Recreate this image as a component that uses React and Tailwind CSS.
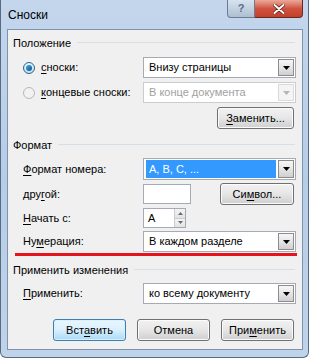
import React from 'react'

function U({ children }) {
  return <span className="underline underline-offset-2">{children}</span>
}

function Arrow({ disabled }) {
  return (
    <div
      className={`h-full w-[16px] border flex items-center justify-center ${
        disabled
          ? 'border-[#dadada] bg-[#f4f4f4]'
          : 'border-[#8c8c8c] bg-gradient-to-b from-[#f6f6f6] via-[#e6e6e6] to-[#cfcfcf]'
      }`}
    >
      <svg width="7" height="4" viewBox="0 0 7 4">
        <path d="M0 0h7L3.5 4z" fill={disabled ? '#b5b5b5' : '#000'} />
      </svg>
    </div>
  )
}

function Combo({ text, disabled, selected, h = 'h-[21px]' }) {
  return (
    <div
      className={`${h} w-[153px] border flex items-stretch p-px bg-white ${
        disabled ? 'border-[#c9cdd2]' : 'border-[#a4abb4]'
      }`}
    >
      <div className="flex-1 flex items-center pl-px pr-[2px]">
        <div
          className={`w-full h-full flex items-center pl-[3px] ${
            selected ? 'bg-[#3399ff] text-white' : disabled ? 'text-[#a0a0a0]' : 'text-black'
          }`}
        >
          {text}
        </div>
      </div>
      <Arrow disabled={disabled} />
    </div>
  )
}

function Button({ children, w = 'w-[73px]', def }) {
  return (
    <div
      className={`${w} h-[22px] rounded-[3px] border flex items-center justify-center ${
        def
          ? 'border-[#3c7fb1] bg-gradient-to-b from-[#eaf6fd] via-[#d9f0fc] to-[#a7d9f5] shadow-[inset_0_0_0_1px_#d7f0fd]'
          : 'border-[#707070] bg-gradient-to-b from-[#f2f2f2] via-[#e6e6e6] to-[#cfcfcf] shadow-[inset_0_0_0_1px_#fbfbfb]'
      }`}
    >
      {children}
    </div>
  )
}

function Heading({ children, className = '' }) {
  return (
    <div className={`h-[16px] flex items-center gap-[6px] ${className}`}>
      <span>{children}</span>
      <div className="flex-1 h-[2px] border-t border-[#d5dfe5] border-b-white mr-[1px]" />
    </div>
  )
}

function Row({ label, children, className = '', h = 'h-[21px]' }) {
  return (
    <div className={`${h} flex items-center pl-[10px] ${className}`}>
      <div className="w-[120px]">{label}</div>
      {children}
    </div>
  )
}

function Radio({ checked, label }) {
  return (
    <div className="w-[120px] flex items-center">
      <div
        className={`w-[12px] h-[12px] rounded-full border flex items-center justify-center ${
          checked ? 'border-[#2c628b] bg-gradient-to-b from-[#e8f4fb] to-[#c3dcec]' : 'border-[#b7b7b7] bg-[#f2f2f2]'
        }`}
      >
        {checked && <div className="w-[6px] h-[6px] rounded-full bg-gradient-to-br from-[#3eb0ef] to-[#0d4f86]" />}
      </div>
      <span className="ml-[6px]">{label}</span>
    </div>
  )
}

export default function App() {
  return (
    <div className="w-[309px] h-[358px] overflow-hidden font-['Liberation_Sans',sans-serif] text-[11px] leading-none text-black whitespace-nowrap">
      <div className="w-full h-full rounded-b-[6px] border border-t-0 border-[#5a6b80] bg-gradient-to-b from-[#c3d6ec] via-[#b6cde8] to-[#bfd3ea] flex flex-col pl-[6px] pr-[5px]">
        {/* Title bar */}
        <div className="h-[29px] flex items-start shrink-0">
          <div className="pt-[9px] pl-px text-[12px]">Сноски</div>
          <div className="ml-auto flex">
            <div className="w-[28px] h-[18px] rounded-bl-[4px] border border-t-0 border-[#6c7c90] bg-gradient-to-b from-[#d8e3ef] to-[#aebfd3] flex items-center justify-center text-[11px] text-[#5a6e86] font-bold">
              ?
            </div>
            <div className="w-[48px] h-[18px] rounded-br-[4px] border border-t-0 border-l-0 border-[#6a2a22] bg-gradient-to-b from-[#e9a99a] via-[#d0533f] to-[#c33f2b] flex items-center justify-center">
              <svg width="12" height="10" viewBox="0 0 12 10">
                <path d="M1.5 1l9 8M10.5 1l-9 8" stroke="#5a1c14" strokeWidth="3.4" strokeLinecap="round" />
                <path d="M1.5 1l9 8M10.5 1l-9 8" stroke="#fff" strokeWidth="2" strokeLinecap="round" />
              </svg>
            </div>
          </div>
        </div>

        {/* Client area */}
        <div className="h-[321px] border border-[#7f93ab] bg-[#f0f0f0] pl-[5px] pr-[6px] flex flex-col">
          <Heading className="mt-[5px]">Положение</Heading>
          <div className="h-[21px] mt-[6px] flex items-center pl-[10px]">
            <Radio checked label={<><U>с</U>носки:</>} />
            <Combo text="Внизу страницы" />
          </div>
          <div className="h-[21px] mt-[4px] flex items-center pl-[10px]">
            <Radio label={<><U>к</U>онцевые сноски:</>} />
            <Combo text="В конце документа" disabled />
          </div>
          <div className="mt-[4px] flex justify-end pr-[2px]">
            <Button w="w-[77px]">
              <U>З</U>аменить...
            </Button>
          </div>

          <Heading className="mt-[8px]">Формат</Heading>
          <Row className="mt-[5px]" h="h-[22px]" label={<><U>Ф</U>ормат номера:</>}>
            <Combo text="A, B, C, ..." selected h="h-[22px]" />
          </Row>
          <Row className="mt-[3px]" h="h-[22px]" label={<>дру<U>г</U>ой:</>}>
            <div className="w-[48px] h-[20px] border border-[#a4abb4] bg-white" />
            <div className="ml-auto mr-[2px]">
              <Button w="w-[74px]">
                Си<U>м</U>вол...
              </Button>
            </div>
          </Row>
          <Row className="mt-[3px]" h="h-[20px]" label={<><U>Н</U>ачать с:</>}>
            <div className="w-[43px] h-[20px] border border-[#a4abb4] bg-white flex">
              <div className="flex-1 flex items-center pl-[4px]">A</div>
              <div className="w-[11px] flex flex-col border-l border-[#c9cdd2]">
                <div className="flex-1 flex items-center justify-center bg-gradient-to-b from-[#f4f4f4] to-[#e2e2e2] border-b border-[#c9cdd2]">
                  <svg width="5" height="3" viewBox="0 0 5 3"><path d="M0 3h5L2.5 0z" fill="#6d6d6d" /></svg>
                </div>
                <div className="flex-1 flex items-center justify-center bg-gradient-to-b from-[#f4f4f4] to-[#e2e2e2]">
                  <svg width="5" height="3" viewBox="0 0 5 3"><path d="M0 0h5L2.5 3z" fill="#6d6d6d" /></svg>
                </div>
              </div>
            </div>
          </Row>
          <Row className="mt-[3px]" label={<>Ну<U>м</U>ерация:</>}>
            <Combo text="В каждом разделе" />
          </Row>
          <div className="h-[3px] mt-px ml-[2px] mr-[-1px] bg-[#e5141c]" />

          <Heading className="mt-[6px]">Применить изменения</Heading>
          <Row className="mt-[5px]" label={<><U>П</U>рименить:</>}>
            <Combo text="ко всему документу" />
          </Row>
          <div className="mt-[15px] flex justify-end gap-[11px] pr-[2px]">
            <Button def>
              Вст<U>а</U>вить
            </Button>
            <Button>Отмена</Button>
            <Button>
              При<U>м</U>енить
            </Button>
          </div>
        </div>
      </div>
    </div>
  )
}
